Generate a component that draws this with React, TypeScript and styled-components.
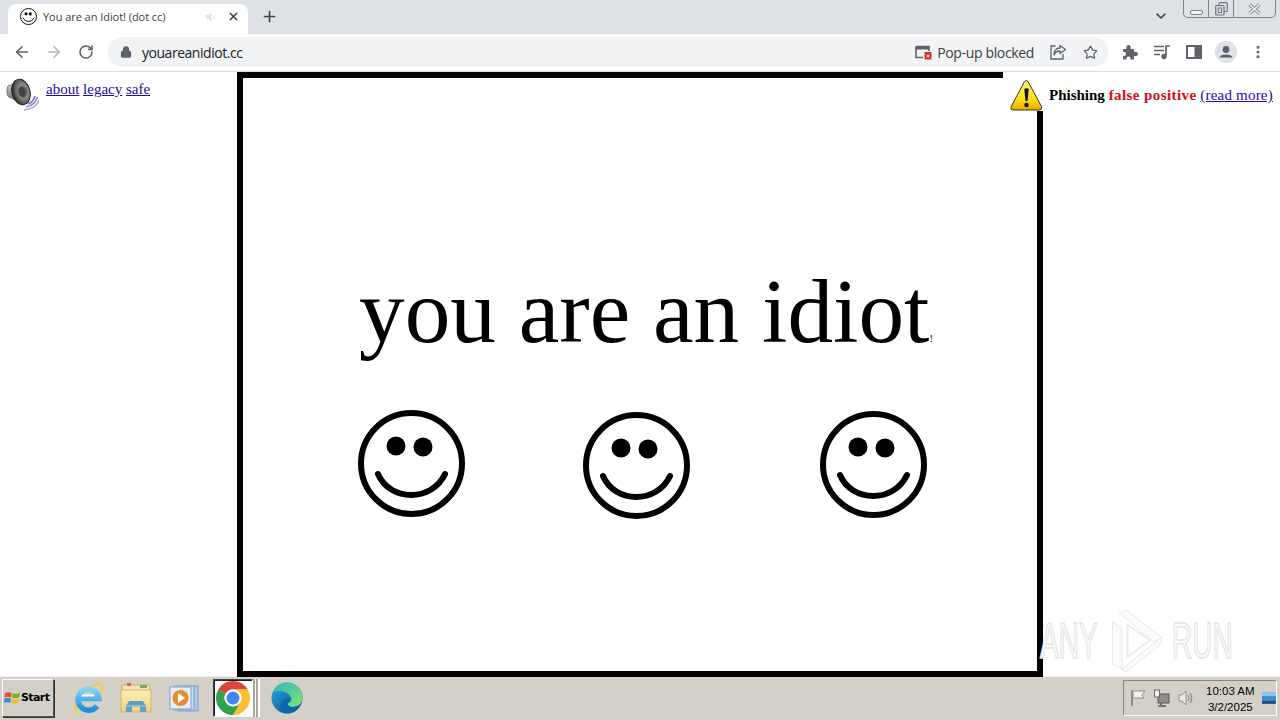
import React from 'react';
import styled, { createGlobalStyle } from 'styled-components';
import {
  ArrowLeft,
  ArrowRight,
  RotateCw,
  Lock,
  Plus,
  X,
  ChevronDown,
  Star,
  EllipsisVertical,
} from 'lucide-react';

const GlobalStyle = createGlobalStyle`
  html, body {
    margin: 0;
    padding: 0;
    height: 720px;
    overflow: hidden;
    background: #fff;
  }
`;

const Smiley: React.FC<{ size: number }> = ({ size }) => (
  <svg width={size} height={size} viewBox="0 0 107 107">
    <circle cx="53.5" cy="53.5" r="50.5" fill="#fff" stroke="#000" strokeWidth="6" />
    <circle cx="38" cy="36" r="9.5" fill="#000" />
    <circle cx="65" cy="37" r="9.5" fill="#000" />
    <path d="M20 64 C 32 92, 74 92, 87 64" fill="none" stroke="#000" strokeWidth="6" strokeLinecap="round" />
  </svg>
);

const SpeakerIcon = () => (
  <svg width="33" height="33" viewBox="0 0 33 33">
    <defs>
      <radialGradient id="cone" cx="0.65" cy="0.5" r="0.62">
        <stop offset="0" stopColor="#3c3c3c" />
        <stop offset="0.45" stopColor="#8a8a8a" />
        <stop offset="0.8" stopColor="#555" />
        <stop offset="1" stopColor="#2a2a2a" />
      </radialGradient>
      <linearGradient id="back" x1="0" y1="0" x2="0" y2="1">
        <stop offset="0" stopColor="#d8d8d8" />
        <stop offset="1" stopColor="#6f6f6f" />
      </linearGradient>
    </defs>
    <path d="M22 26 Q27.500 24 29 18" fill="none" stroke="#7a76b8" strokeWidth="1.700" />
    <path d="M20 29 Q29.500 27 31.500 19" fill="none" stroke="#8f8bc4" strokeWidth="1.600" />
    <path d="M18 32 Q31 30.500 33 22" fill="none" stroke="#aeabd8" strokeWidth="1.500" />
    <path d="M1 11 Q1 7 5 7 L12 4 L12 23 L5 20 Q1 19 1 15 Z" fill="url(#back)" stroke="#666" strokeWidth="0.800" />
    <ellipse cx="15" cy="14" rx="9" ry="13" transform="rotate(-14 15 14)" fill="url(#cone)" stroke="#1e1e1e" />
    <ellipse cx="16" cy="14" rx="3.500" ry="5.500" transform="rotate(-14 16 14)" fill="#444" />
  </svg>
);

const WarningIcon = () => (
  <svg width="33" height="31" viewBox="0 0 33 31">
    <defs>
      <linearGradient id="warn" x1="0" y1="0" x2="0" y2="1">
        <stop offset="0" stopColor="#fff36b" />
        <stop offset="0.6" stopColor="#fde01a" />
        <stop offset="1" stopColor="#e6ad00" />
      </linearGradient>
    </defs>
    <path d="M14.500 1.500 Q16.500 -0.500 18 1.500 L31.500 26.500 Q32.500 30 29.500 30 L3 30 Q0 30 1 27 Z" fill="url(#warn)" stroke="#3b3524" strokeWidth="1" />
    <path d="M14.300 9 Q16.500 7.500 18.700 9 L17.500 21 L15.500 21 Z" fill="#111" />
    <circle cx="16.500" cy="25" r="2.200" fill="#111" />
  </svg>
);

const PopupBlockedIcon = () => (
  <svg width="17" height="16" viewBox="0 0 17 16">
    <path d="M1 2.500 H14 V7 M8 13.500 H1 V2.500" fill="none" stroke="#5f6368" strokeWidth="1.600" />
    <rect x="1" y="2" width="13" height="3.500" fill="#5f6368" />
    <rect x="9.500" y="8" width="7" height="7.500" fill="#d93025" />
    <path d="M11.500 10.500 L14.500 13.500 M14.500 10.500 L11.500 13.500" stroke="#fff" strokeWidth="1" />
  </svg>
);

const ShareIcon = () => (
  <svg width="16" height="16" viewBox="0 0 16 16">
    <path d="M5.500 2 H1 V15 H13 V10" fill="none" stroke="#5f6368" strokeWidth="1.300" />
    <path d="M10 1.500 L15.500 5.500 L10 9.500 V7 C7 7 5 8.500 4 11 C4 7 6 4 10 4 Z" fill="none" stroke="#5f6368" strokeWidth="1.300" strokeLinejoin="round" />
  </svg>
);

const PuzzleIcon = () => (
  <svg width="16" height="16" viewBox="0 0 16 16">
    <path d="M1 5 H4.500 C4 3.500 4.500 1 6.500 1 C8.500 1 9 3.500 8.500 5 H12 V8 C14 7.500 16 8.500 16 10 C16 11.500 14 12.500 12 12 V15.500 H8.500 C9 13.500 8 12.500 6.500 12.500 C5 12.500 4 13.500 4.500 15.500 H1 V12 C2.500 12.500 4 11.500 4 10 C4 8.500 2.500 7.500 1 8 Z" fill="#5f6368" />
  </svg>
);

const MediaIcon = () => (
  <svg width="18" height="16" viewBox="0 0 18 16">
    <path d="M1 2.500 H11 M1 6.500 H11 M1 10.500 H7" stroke="#5f6368" strokeWidth="1.500" fill="none" />
    <path d="M13 11.500 V2 H17" stroke="#5f6368" strokeWidth="1.700" fill="none" />
    <circle cx="11" cy="12.500" r="2.700" fill="#5f6368" />
  </svg>
);

const SidePanelIcon = () => (
  <svg width="16" height="14" viewBox="0 0 16 14">
    <rect x="1" y="1" width="14" height="12" fill="#fff" stroke="#5f6368" strokeWidth="2" />
    <rect x="8.500" y="1" width="6.500" height="12" fill="#5f6368" />
  </svg>
);

const AvatarIcon = () => (
  <svg width="22" height="22" viewBox="0 0 22 22">
    <circle cx="11" cy="11" r="11" fill="#dfe1e5" />
    <circle cx="11" cy="8.500" r="3.400" fill="#54606f" />
    <path d="M4.500 16.500 C5.500 12.500 16.500 12.500 17.500 16.500 Z" fill="#54606f" />
  </svg>
);

const MuteIcon = () => (
  <svg width="12" height="12" viewBox="0 0 12 12">
    <path d="M1 4 H3.500 L6.500 1.500 V10.500 L3.500 8 H1 Z" fill="#e3e4e6" />
    <path d="M8.500 4 Q10 6 8.500 8" fill="none" stroke="#eceded" strokeWidth="1.200" />
  </svg>
);

const CloseGlyph = () => (
  <svg width="15" height="12" viewBox="0 0 15 12">
    <path d="M2.500 1.500 L12.500 10.500 M12.500 1.500 L2.500 10.500" stroke="#858a91" strokeWidth="3.400" />
    <path d="M2.500 1.500 L12.500 10.500 M12.500 1.500 L2.500 10.500" stroke="#f1f2f4" strokeWidth="1.600" />
  </svg>
);

const RestoreGlyph = () => (
  <svg width="13" height="14" viewBox="0 0 13 14">
    <rect x="4" y="0.700" width="8.300" height="8.800" rx="1" fill="none" stroke="#6f747b" strokeWidth="1.200" />
    <rect x="0.700" y="3.500" width="8.300" height="9.500" rx="1" fill="#dee1e6" stroke="#6f747b" strokeWidth="1.200" />
    <rect x="3.200" y="6" width="3.300" height="4.500" fill="none" stroke="#6f747b" />
  </svg>
);

const WindowsFlag = () => (
  <svg width="17" height="17" viewBox="0 0 17 17">
    <path d="M1 4 Q4 2.500 7.800 4 L7 8.500 Q4 7 0.500 8.500 Z" fill="#e2562c" />
    <path d="M8.800 4.200 Q12 5.500 16 4 L15 8.500 Q11.500 10 8 8.700 Z" fill="#74b52d" />
    <path d="M0.500 9.500 Q4 8 7 9.500 L6.200 14 Q3 12.500 0 14 Z" fill="#3f8ad8" />
    <path d="M8 9.700 Q11.500 11 15 9.500 L14 14 Q10.500 15.500 7.200 14.200 Z" fill="#f1bb2b" />
  </svg>
);

const IeIcon = () => (
  <svg width="32" height="32" viewBox="0 0 32 32">
    <defs>
      <linearGradient id="ieBlue" x1="0" y1="0" x2="0" y2="1">
        <stop offset="0" stopColor="#7fd4f5" />
        <stop offset="1" stopColor="#1c8fdc" />
      </linearGradient>
    </defs>
    <path d="M8 30 C 1 31 2 22 10 12 C 16 5 27 -1 30 3 C 31.500 5 30 9 28 11" fill="none" stroke="#f0cf4e" strokeWidth="2.200" />
    <path d="M25 24 A 10.500 10.500 0 1 1 27 16.500 L 9 16.500" fill="none" stroke="url(#ieBlue)" strokeWidth="5.500" />
    <path d="M10 13.500 H22" stroke="#fff" strokeWidth="2" />
  </svg>
);

const FolderIcon = () => (
  <svg width="32" height="32" viewBox="0 0 32 32">
    <defs>
      <linearGradient id="folderBody" x1="0" y1="0" x2="0" y2="1">
        <stop offset="0" stopColor="#fdf0b4" />
        <stop offset="1" stopColor="#efd078" />
      </linearGradient>
    </defs>
    <path d="M2 3 H30 V12 H2 Z" fill="#f3e6b5" stroke="#bfae77" />
    <rect x="7" y="1" width="4" height="3" fill="#d9685a" />
    <rect x="13" y="2" width="4" height="2" fill="#c9c3a8" />
    <rect x="20" y="3" width="7" height="3" fill="#6fb25e" />
    <path d="M1 8 H31 V30 H1 Z" fill="url(#folderBody)" stroke="#cdb670" />
    <path d="M6 30 V24 L9 19 H23 L26 24 V30 H20 V24 H12 V30 Z" fill="#5d9fc9" />
    <path d="M6 24 H26" stroke="#8fc4e2" strokeWidth="1.500" />
  </svg>
);

const MediaPlayerIcon = () => (
  <svg width="30" height="30" viewBox="0 0 30 30">
    <rect x="9" y="3" width="20" height="25" fill="#a9c7e6" stroke="#7ea3c8" />
    <rect x="5" y="3" width="20" height="24" fill="#c7dcef" stroke="#7ea3c8" />
    <rect x="1" y="4" width="21" height="22" fill="#e3eef8" stroke="#7ea3c8" />
    <circle cx="11.500" cy="15" r="8" fill="#e88a2d" />
    <path d="M9 10 L16 15 L9 20 Z" fill="#fff" />
  </svg>
);

const ChromeIcon = () => (
  <svg width="34" height="34" viewBox="-17 -17 34 34">
    <path d="M-14.720 -8.500 A17 17 0 0 1 14.720 -8.500 L0 -8.500 A8.500 8.500 0 0 0 -7.360 -4.250 Z" fill="#dc4437" />
    <path d="M14.720 -8.500 A17 17 0 0 1 0 17 L7.360 4.250 A8.500 8.500 0 0 0 0 -8.500 Z" fill="#fbc02d" />
    <path d="M0 17 A17 17 0 0 1 -14.720 -8.500 L-7.360 -4.250 A8.500 8.500 0 0 0 7.360 4.250 Z" fill="#30a14e" />
    <circle r="8.500" fill="#fff" />
    <circle r="6.500" fill="#4285f4" />
  </svg>
);

const EdgeIcon = () => (
  <svg width="32" height="32" viewBox="0 0 32 32">
    <defs>
      <linearGradient id="edgeGreen" x1="0" y1="0" x2="1" y2="1">
        <stop offset="0" stopColor="#2bb8c4" />
        <stop offset="1" stopColor="#82e46c" />
      </linearGradient>
      <linearGradient id="edgeBlue" x1="0" y1="0" x2="1" y2="1">
        <stop offset="0" stopColor="#27a4dc" />
        <stop offset="1" stopColor="#0a4d92" />
      </linearGradient>
    </defs>
    <circle cx="16" cy="16" r="15.500" fill="url(#edgeBlue)" />
    <path d="M2 10 C 6 2 13 0.500 16 0.500 C 25 0.500 31.500 8 31.500 16 C 31.500 21 27 25 22 25 C 19 25 16.500 23.500 16.500 21.500 C 19.500 20.500 21 18.500 20 15.500 C 18 9.500 8 7.500 2 10 Z" fill="url(#edgeGreen)" />
    <path d="M16.500 21.500 C 16.500 23.500 19 25 22 25 C 24 25 26 24.300 27.700 23 C 25 28 20 31.500 14 31.300 C 10 30 8 26 10 21 C 11 18 14 16 17 16 C 19 16 19.500 19 16.500 21.500 Z" fill="#0f66ad" />
  </svg>
);

const FlagTrayIcon = () => (
  <svg width="16" height="18" viewBox="0 0 16 18">
    <path d="M2 1 V17" stroke="#777" strokeWidth="1.500" />
    <path d="M3 2 H15 L12 6 L14 9 H3 Z" fill="#f1f0ec" stroke="#8d8d8d" />
  </svg>
);

const NetworkTrayIcon = () => (
  <svg width="16" height="18" viewBox="0 0 16 18">
    <rect x="4" y="5" width="11" height="9" fill="#8e8e8e" stroke="#555" />
    <path d="M7 14 V16 M4 17 H12" stroke="#555" strokeWidth="1.500" />
    <rect x="0.500" y="1" width="5" height="7" fill="#f1f0ec" stroke="#666" />
  </svg>
);

const VolumeTrayIcon = () => (
  <svg width="16" height="18" viewBox="0 0 16 18">
    <path d="M1 6 H4 L8 2 V16 L4 12 H1 Z" fill="#e9e9e9" stroke="#8b8b8b" />
    <path d="M10 6 Q12 9 10 12 M12 4 Q15.500 9 12 14" fill="none" stroke="#8b8b8b" strokeWidth="1.200" />
  </svg>
);

const DesktopTrayIcon = () => (
  <svg width="15" height="12" viewBox="0 0 15 12">
    <rect x="0" y="0" width="15" height="12" fill="#3a8fd8" />
    <rect x="0" y="0" width="15" height="4" fill="#8cc5ee" />
    <rect x="0" y="9" width="15" height="3" fill="#2c4a6e" />
  </svg>
);

const RunLogo = () => (
  <svg width="58" height="62" viewBox="0 0 58 66">
    <path d="M4 12 L4 58 L14 63 L14 20 Z" fill="#fbfbfb" stroke="#e6e6e6" />
    <path d="M11 3 L19 0 L56 29 L48 34 Z" fill="#fbfbfb" stroke="#e6e6e6" />
    <path d="M14 63 L56 29 L56 36 L18 66 Z" fill="#fbfbfb" stroke="#e6e6e6" />
    <path d="M20 16 L44 32 L20 50 Z" fill="none" stroke="#ebebeb" strokeWidth="2" />
  </svg>
);

export default function App() {
  return (
    <Screen>
      <GlobalStyle />
      <TabStrip>
        <Tab>
          <FaviconSlot>
            <Smiley size={17} />
          </FaviconSlot>
          <TabTitle>You are an Idiot! (dot cc)</TabTitle>
          <MuteIcon />
          <TabClose>
            <X size={13} strokeWidth={3} />
          </TabClose>
        </Tab>
        <NewTab>
          <Plus size={17} strokeWidth={2.4} />
        </NewTab>
        <StripSpacer />
        <TabSearch>
          <ChevronDown size={16} strokeWidth={2.4} />
        </TabSearch>
        <WindowControls>
          <WindowButton $width={24}>
            <MinGlyph />
          </WindowButton>
          <WindowButton $width={24}>
            <RestoreGlyph />
          </WindowButton>
          <WindowButton $width={41}>
            <CloseGlyph />
          </WindowButton>
        </WindowControls>
      </TabStrip>

      <Toolbar>
        <NavButton>
          <ArrowLeft size={18} strokeWidth={2.2} />
        </NavButton>
        <NavButton $disabled>
          <ArrowRight size={18} strokeWidth={2.2} />
        </NavButton>
        <NavButton>
          <RotateCw size={16} strokeWidth={2.4} />
        </NavButton>
        <Omnibox>
          <Lock size={12} strokeWidth={2.6} color="#5f6368" fill="#5f6368" />
          <Url>youareanidiot.cc</Url>
          <PopupChip>
            <PopupBlockedIcon />
            <PopupLabel>Pop-up blocked</PopupLabel>
          </PopupChip>
          <OmniAction>
            <ShareIcon />
          </OmniAction>
          <OmniAction>
            <Star size={15} strokeWidth={2} />
          </OmniAction>
        </Omnibox>
        <ToolbarIcons>
          <ToolIcon>
            <PuzzleIcon />
          </ToolIcon>
          <ToolIcon>
            <MediaIcon />
          </ToolIcon>
          <ToolIcon>
            <SidePanelIcon />
          </ToolIcon>
          <ToolIcon>
            <AvatarIcon />
          </ToolIcon>
          <ToolIcon>
            <EllipsisVertical size={16} strokeWidth={2.6} />
          </ToolIcon>
        </ToolbarIcons>
      </Toolbar>

      <Page>
        <LeftColumn>
          <SpeakerIcon />
          <Links>
            <a href="#about">about</a> <a href="#legacy">legacy</a> <a href="#safe">safe</a>
          </Links>
        </LeftColumn>

        <Frame>
          <Heading>
            you are an idiot<Bang>!</Bang>
          </Heading>
          <SmileyRow>
            <SmileySlot $top={0} $left={0}>
              <Smiley size={107} />
            </SmileySlot>
            <SmileySlot $top={2} $left={118}>
              <Smiley size={107} />
            </SmileySlot>
            <SmileySlot $top={1} $left={130}>
              <Smiley size={107} />
            </SmileySlot>
          </SmileyRow>
        </Frame>

        <Notice>
          <WarningIcon />
          <NoticeText>
            Phishing <Red>false positive</Red> <NoticeLink href="#more">(read more)</NoticeLink>
          </NoticeText>
        </Notice>

        <Watermark>
          <WatermarkText>ANY</WatermarkText>
          <RunLogo />
          <WatermarkText>RUN</WatermarkText>
        </Watermark>
      </Page>

      <Taskbar>
        <StartButton>
          <WindowsFlag />
          Start
        </StartButton>
        <TaskIcons>
          <TaskIcon><IeIcon /></TaskIcon>
          <TaskIcon><FolderIcon /></TaskIcon>
          <TaskIcon><MediaPlayerIcon /></TaskIcon>
          <ActiveTask><ChromeIcon /></ActiveTask>
          <TaskIcon><EdgeIcon /></TaskIcon>
        </TaskIcons>
        <Tray>
          <TrayIcons>
            <FlagTrayIcon />
            <NetworkTrayIcon />
            <VolumeTrayIcon />
          </TrayIcons>
          <Clock>
            <span>10:03 AM</span>
            <span>3/2/2025</span>
          </Clock>
          <DesktopTrayIcon />
        </Tray>
      </Taskbar>
    </Screen>
  );
}

// Styles
const Screen = styled.div`
  width: 1280px;
  height: 720px;
  display: flex;
  flex-direction: column;
  overflow: hidden;
  background: #fff;
`;

const TabStrip = styled.div`
  height: 34px;
  flex: none;
  display: flex;
  align-items: flex-start;
  background: #dee1e6;
  padding-left: 8px;
`;

const Tab = styled.div`
  width: 240px;
  height: 30px;
  margin-top: 4px;
  box-sizing: border-box;
  display: flex;
  align-items: center;
  padding: 0 8px 5px 12px;
  background: #fff;
  border-radius: 8px 8px 0 0;
`;

const FaviconSlot = styled.div`
  width: 17px;
  height: 17px;
  margin-right: 6px;
  flex: none;
  display: flex;
`;

const TabTitle = styled.span`
  flex: 1;
  font: 11px "Open Sans", sans-serif;
  letter-spacing: -0.05px;
  color: #3c4043;
  white-space: nowrap;
`;

const TabClose = styled.div`
  display: flex;
  margin-left: 10px;
  color: #45494d;
`;

const NewTab = styled.div`
  display: flex;
  margin: 8px 0 0 13px;
  color: #45494d;
`;

const StripSpacer = styled.div`
  flex: 1;
`;

const TabSearch = styled.div`
  display: flex;
  margin: 8px 14px 0 0;
  color: #3c4043;
`;

const WindowControls = styled.div`
  display: flex;
  flex: none;
  height: 17px;
  margin-right: 4px;
  border: 1px solid #7f858d;
  border-top: none;
  border-radius: 0 0 5px 5px;
`;

const WindowButton = styled.div<{ $width: number }>`
  width: ${(p) => p.$width}px;
  display: flex;
  align-items: center;
  justify-content: center;
  border-right: 1px solid #7f858d;

  &:last-child {
    border-right: none;
  }
`;

const MinGlyph = styled.div`
  width: 11px;
  height: 3px;
  margin-top: 7px;
  border: 1px solid #7f858d;
  border-radius: 2px;
  background: #f1f2f4;
`;

const Toolbar = styled.div`
  height: 38px;
  flex: none;
  box-sizing: border-box;
  display: flex;
  align-items: center;
  padding: 0 6px 1px 6px;
  background: #fff;
  border-bottom: 1px solid #dadce0;
`;

const NavButton = styled.div<{ $disabled?: boolean }>`
  width: 32px;
  height: 30px;
  flex: none;
  display: flex;
  align-items: center;
  justify-content: center;
  color: ${(p) => (p.$disabled ? '#b4b6b9' : '#5f6368')};
`;

const Omnibox = styled.div`
  width: 1000px;
  height: 30px;
  flex: none;
  margin-left: 6px;
  box-sizing: border-box;
  display: flex;
  align-items: center;
  padding: 0 2px 0 12px;
  background: #f1f3f4;
  border-radius: 15px;
`;

const Url = styled.span`
  flex: 1;
  margin-left: 10px;
  font: 14px "Open Sans", sans-serif;
  letter-spacing: -0.47px;
  color: #202124;
`;

const PopupChip = styled.div`
  display: flex;
  align-items: center;
  gap: 5px;
  margin-right: 8px;
`;

const PopupLabel = styled.span`
  font: 14px "Open Sans", sans-serif;
  letter-spacing: -0.35px;
  color: #3c4043;
`;

const OmniAction = styled.div`
  width: 32px;
  display: flex;
  justify-content: center;
  color: #5f6368;
`;

const ToolbarIcons = styled.div`
  flex: 1;
  display: flex;
  justify-content: space-between;
  margin-left: 6px;
`;

const ToolIcon = styled.div`
  width: 32px;
  height: 24px;
  display: flex;
  align-items: center;
  justify-content: center;
  color: #5f6368;
`;

const Page = styled.div`
  position: relative;
  flex: 1;
  min-height: 0;
  display: flex;
  align-items: flex-start;
  background: #fff;
`;

const LeftColumn = styled.div`
  width: 237px;
  flex: none;
  box-sizing: border-box;
  display: flex;
  align-items: flex-start;
  gap: 6px;
  padding: 6px 0 0 6px;
`;

const Links = styled.div`
  margin: 2px 0 0 1px;
  font: 15px/18px "Liberation Serif", serif;

  a {
    color: #1a0dab;
  }
`;

const Frame = styled.div`
  width: 806px;
  height: 605px;
  flex: none;
  box-sizing: border-box;
  display: flex;
  flex-direction: column;
  padding: 0 0 0 115px;
  border: 6px solid #000;
  background: #fff;
`;

const Heading = styled.h1`
  margin: 174px 0 0 1px;
  font: 400 91.3px/120px "Liberation Serif", serif;
  color: #000;
  white-space: nowrap;
`;

const Bang = styled.span`
  font-size: 10px;
  line-height: 1;
`;

const SmileyRow = styled.div`
  display: flex;
  margin-top: 38px;
`;

const SmileySlot = styled.div<{ $top: number; $left: number }>`
  display: flex;
  margin-top: ${(p) => p.$top}px;
  margin-left: ${(p) => p.$left}px;
`;

const Notice = styled.div`
  position: absolute;
  top: 0;
  right: 0;
  width: 277px;
  height: 39px;
  box-sizing: border-box;
  display: flex;
  align-items: flex-start;
  gap: 6px;
  padding: 8px 0 0 7px;
  background: #fff;
`;

const NoticeText = styled.div`
  margin-top: 6px;
  font: 700 15px/18px "Liberation Serif", serif;
  color: #000;
  white-space: nowrap;
`;

const Red = styled.span`
  color: #d40f17;
  letter-spacing: 0.42px;
`;

const NoticeLink = styled.a`
  font-weight: 400;
  letter-spacing: 0.2px;
  color: #1a0dab;
`;

const Watermark = styled.div`
  position: absolute;
  left: 1040px;
  top: 538px;
  width: 195px;
  display: flex;
  align-items: center;
  gap: 7px;
  pointer-events: none;
`;

const WatermarkText = styled.span`
  width: 60px;
  flex: none;
  font: 400 50px/62px "Liberation Sans", sans-serif;
  white-space: nowrap;
  color: #fcfcfc;
  -webkit-text-stroke: 1.5px #e4e4e4;
  transform: scaleX(0.56);
  transform-origin: left center;
`;

const Taskbar = styled.div`
  height: 44px;
  flex: none;
  box-sizing: border-box;
  display: flex;
  align-items: center;
  padding: 0 3px 2px 2px;
  background: #d4d0c8;
  border-top: 1px solid #f3f1ec;
`;

const StartButton = styled.div`
  width: 52px;
  height: 38px;
  flex: none;
  box-sizing: border-box;
  display: flex;
  align-items: center;
  padding-left: 1px;
  font: 700 11px "DejaVu Sans", sans-serif;
  letter-spacing: -0.6px;
  color: #000;
  border: 1px solid;
  border-color: #fff #555 #555 #fff;
  box-shadow: 1px 1px 0 #333;
`;

const TaskIcons = styled.div`
  flex: 1;
  display: flex;
  align-items: center;
  gap: 8px;
  padding-left: 14px;
`;

const TaskIcon = styled.div`
  width: 40px;
  height: 38px;
  display: flex;
  align-items: center;
  justify-content: center;
`;

const ActiveTask = styled(TaskIcon)`
  box-sizing: border-box;
  margin: 0 6px 0 1px;
  background: #fff;
  border: 1px solid;
  border-color: #444 #fff #fff #444;
  box-shadow: inset 1px 1px 0 #222, 2px 0 0 #a9a69e, 3px 0 0 #fff, 5px 0 0 #a9a69e, 7px 0 0 #fff;
`;

const Tray = styled.div`
  width: 154px;
  height: 36px;
  flex: none;
  box-sizing: border-box;
  display: flex;
  align-items: center;
  padding: 0 0 0 6px;
  border: 1px solid;
  border-color: #8a877f #fff #fff #8a877f;
`;

const TrayIcons = styled.div`
  display: flex;
  flex: none;
  gap: 8px;
`;

const Clock = styled.div`
  display: flex;
  flex: none;
  flex-direction: column;
  align-items: center;
  gap: 2px;
  margin: 2px 7px 0 12px;
  font: 11.5px/14px "Liberation Sans", sans-serif;
  white-space: nowrap;
  color: #000;
`;
